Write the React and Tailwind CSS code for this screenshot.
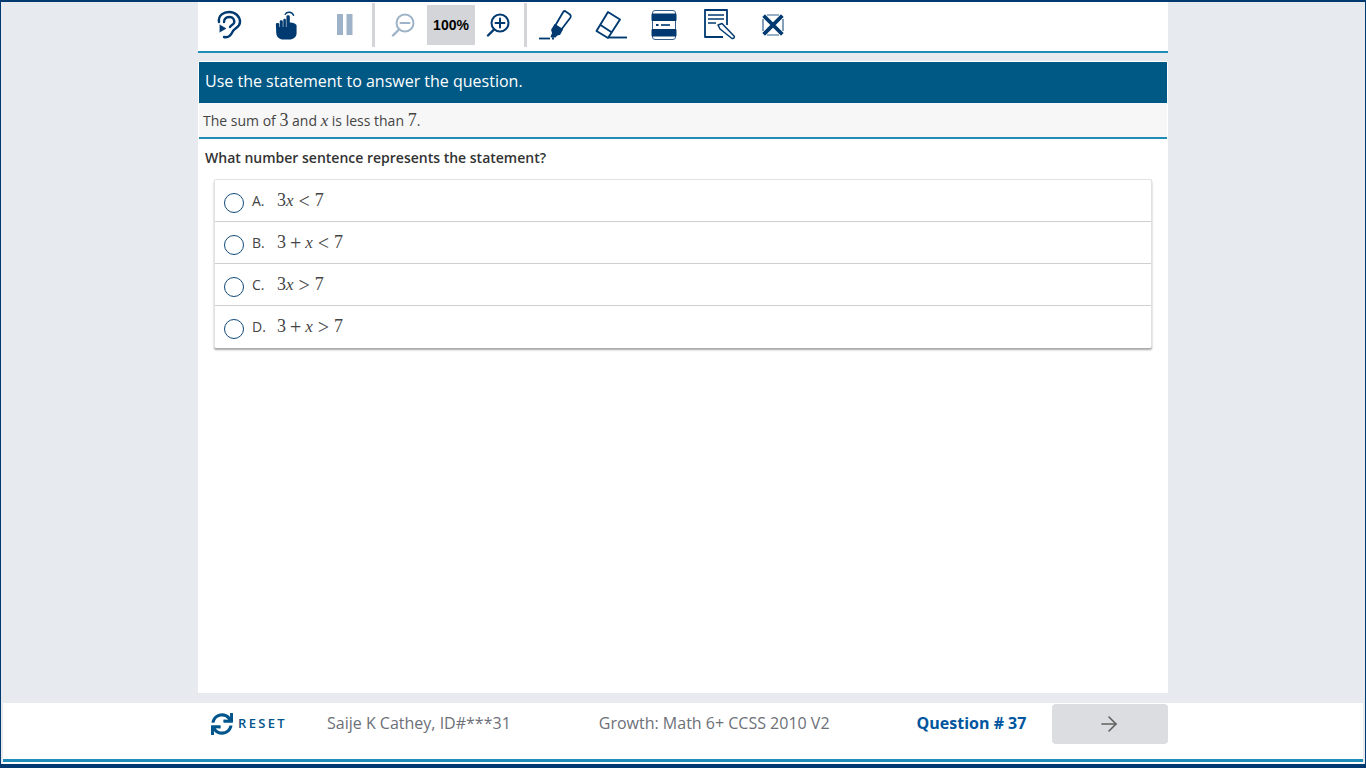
import { ArrowRight } from 'lucide-react';
import { FaSync } from 'react-icons/fa';

const EarIcon = () => (
  <svg width="26" height="30" viewBox="0 0 26 30" fill="none" stroke="#003a70" strokeWidth="2.4" strokeLinecap="round">
    <path d="M3 12 C2 5 8 2 13 2 C19 2 24 6 24 12 C24 17 19 18 17 21 C15 25 13 28 8 27" />
    <path d="M8 12 C8 8 11 7 13.5 7 C17 7 19 10 18 13 C17 15 15 15 14 17" />
    <path d="M4 15 L10 18.5 L4 22 Z" fill="#003a70" strokeWidth="0.5" strokeLinejoin="round" />
  </svg>
);

const HandIcon = () => (
  <svg width="22" height="29" viewBox="0 0 26 30" fill="none" preserveAspectRatio="none">
    <path d="M12 3.5 C14 0.5 20 0.5 22 4.5" stroke="#003a70" strokeWidth="1.5" strokeLinecap="round" />
    <path d="M13.5 6 C13.5 4 17.5 4 17.5 6 L17.5 12 C21 12 25 13 25.5 15 L25.5 23 C25.5 27 21.5 29.5 17 29.5 L10 29.5 C5 29.5 2 27 1.5 23 L1 14 C1 12 5 12 5 14 L5 16.5 L5.6 16.5 L5.6 11 C5.6 9 9.2 9 9.2 11 L9.2 16.5 L9.8 16.5 L9.8 9.5 C9.8 7.5 12.9 7.5 12.9 9.5 L12.9 16.5 L13.5 16.5 Z" fill="#003a70" />
  </svg>
);

const PauseIcon = () => (
  <svg width="16" height="22" viewBox="0 0 16 22" fill="#9fb3c8">
    <rect x="0" y="0" width="6" height="21" />
    <rect x="9.5" y="0" width="6" height="21" />
  </svg>
);

const ZoomIcon = ({ plus, color }) => (
  <svg width="24" height="24" viewBox="0 0 24 24" fill="none" stroke={color} strokeWidth="2" strokeLinecap="round">
    <circle cx="14" cy="10" r="8.5" />
    <path d="M8 16.5 L2 22.5" strokeWidth="2.4" />
    <path d="M9.5 10 H18.5" />
    {plus && <path d="M14 5.5 V14.5" />}
  </svg>
);

const HighlighterIcon = () => (
  <svg width="34" height="32" viewBox="0 0 34 32" fill="none" stroke="#003a70" strokeWidth="1.8" strokeLinejoin="round">
    <path d="M0 29.5 H11" />
    <path d="M13 29.5 H15" />
    <path d="M26 2 L31 5.5 C32 6.5 32 7.5 31.5 8.5 L22 21 L16 17 L24.5 2.5 C25 2 25.5 2 26 2 Z" />
    <path d="M16 16 L13 21 L14 24 L12.5 27.5 L16 27.5 L18 25.5 L20.5 25 L23 20.5 Z" fill="#003a70" />
  </svg>
);

const EraserIcon = () => (
  <svg width="34" height="30" viewBox="0 0 34 30" fill="none" stroke="#003a70" strokeWidth="1.9" strokeLinejoin="round">
    <path d="M13 2 L25 9.5 L13 28 L1.5 21 Z" />
    <path d="M5.5 15 L17 22.5" />
    <path d="M14 27.5 H32" />
  </svg>
);

const CalcIcon = () => (
  <svg width="26" height="30" viewBox="0 0 26 30" fill="none">
    <rect x="1.5" y="0.5" width="23" height="29" rx="2.5" stroke="#33618c" strokeWidth="1" />
    <rect x="0.5" y="3.5" width="25" height="7.5" rx="1" fill="#003a70" />
    <rect x="0.5" y="19" width="25" height="7.5" rx="1" fill="#003a70" />
    <rect x="5" y="14" width="2.5" height="2" fill="#003a70" />
    <rect x="10" y="14.2" width="9" height="1.6" fill="#003a70" />
  </svg>
);

const NotepadIcon = () => (
  <svg width="32" height="32" viewBox="0 0 32 32" fill="none" stroke="#003a70" strokeLinejoin="round">
    <path d="M19 28 H1 V1 H23 V16" strokeWidth="1.8" />
    <path d="M4 6 H20 M4 10 H20 M4 14 H12" strokeWidth="1.6" />
    <path d="M14 16 L18 14.5 L30 27 C31 28 30 30 28 29.5 L16 20 Z" strokeWidth="1.5" />
  </svg>
);

const CrossOutIcon = () => (
  <svg width="24" height="24" viewBox="0 0 24 24" fill="none" stroke="#003a70">
    <path d="M4 4 L20 20 M20 4 L4 20" strokeWidth="3.8" strokeLinecap="square" />
    <path d="M2 6 V18 M22 6 V18 M6 2 H18 M6 22 H18" strokeWidth="1.2" stroke="#33618c" />
  </svg>
);

const Num = ({ children }) => <span className="font-['Liberation_Serif',serif] text-[18px]">{children}</span>;
const Mi = ({ children }) => <i className="font-['Liberation_Serif',serif] text-[17px]">{children}</i>;
const Op = ({ children, tight }) => (
  <span className={`${tight ? 'mx-[4px]' : 'mx-[5px]'} font-['Liberation_Serif',serif] text-[20px] leading-none`}>{children}</span>
);

const choices = [
  { letter: 'A.', plus: false, op: '<' },
  { letter: 'B.', plus: true, op: '<' },
  { letter: 'C.', plus: false, op: '>' },
  { letter: 'D.', plus: true, op: '>' },
];

const Choice = ({ letter, plus, op, last }) => (
  <div className={`flex h-[42px] items-center pl-[9px] ${last ? 'pb-px' : 'border-b border-[#cfcfcf]'}`}>
    <span className="mt-[5px] h-5 w-5 rounded-full border-[1.5px] border-[#0f4a7a]" />
    <span className="ml-2 mt-px w-[25px] text-sm text-[#444]">{letter}</span>
    <span className="flex items-center text-[#444]">
      <Num>3</Num>
      {plus && <Op tight>+</Op>}
      <Mi>x</Mi>
      <Op>{op}</Op>
      <Num>7</Num>
    </span>
  </div>
);

export default function App() {
  return (
    <div className="flex h-screen w-full flex-col overflow-hidden border-x border-t-2 border-[#003a70] bg-white font-['Open_Sans','Noto_Sans',sans-serif]">
      <div className="flex min-h-0 flex-1 flex-col border-x-2 border-[#e7eaef]">
        <div className="flex min-h-0 flex-1 flex-col bg-[#e7eaef]">
          <div className="mx-auto flex min-h-0 w-[970px] flex-1 flex-col bg-white">
            <div className="flex h-[51px] shrink-0 items-center border-b-2 border-[#1f8db8] bg-white">
              <div className="flex items-center pb-[3px] pl-[18px]">
                <EarIcon />
                <span className="ml-[33px]"><HandIcon /></span>
                <span className="ml-[40px]"><PauseIcon /></span>
                <span className="ml-[19px] h-[44px] w-[3px] bg-[#d4d5d8]" />
                <span className="ml-[16px]"><ZoomIcon color="#9fb3c8" /></span>
                <span className="ml-[12px] flex h-10 w-12 items-center justify-center bg-[#d4d5d8] font-['Liberation_Sans',sans-serif] text-sm font-bold text-black">100%</span>
                <span className="ml-[11px]"><ZoomIcon plus color="#003a70" /></span>
                <span className="ml-[14px] h-[44px] w-[3px] bg-[#d4d5d8]" />
                <span className="ml-[12px]"><HighlighterIcon /></span>
                <span className="ml-[22px]"><EraserIcon /></span>
                <span className="ml-[22px]"><CalcIcon /></span>
                <span className="ml-[27px]"><NotepadIcon /></span>
                <span className="ml-[25px]"><CrossOutIcon /></span>
              </div>
            </div>
            <div className="h-2 shrink-0 bg-[#e7eaef]" />
            <div className="h-px shrink-0 bg-white" />
            <div className="mx-px flex h-[41px] shrink-0 items-center bg-[#005885] pb-1 pl-[6px] text-base text-white">
              Use the statement to answer the question.
            </div>
            <div className="mx-px flex h-9 shrink-0 items-center border-b-2 border-[#1f8db8] bg-[#f7f7f7] pl-1 pt-px text-sm text-[#444]">
              <span className="whitespace-pre">
                The sum of <Num>3</Num> and <Mi>x</Mi> is less than <Num>7</Num>.
              </span>
            </div>
            <p className="pl-[7px] pt-[9px] text-sm leading-5 font-semibold text-[#333]">What number sentence represents the statement?</p>
            <div className="mx-4 mt-[11px] rounded-[2px] border border-b-0 border-[#e2e2e2] bg-white shadow-[0_2px_2px_rgba(0,0,0,0.35)]">
              {choices.map((choice, index) => (
                <Choice key={choice.letter} {...choice} last={index === choices.length - 1} />
              ))}
            </div>
          </div>
          <div className="h-[10px] shrink-0" />
        </div>
        <div className="flex h-[56px] shrink-0 justify-center bg-white pt-px">
          <div className="flex h-10 w-[970px] items-center whitespace-nowrap pl-[13px]">
            <FaSync size={22} color="#00558c" className="shrink-0" />
            <span className="ml-[5px] shrink-0 text-[13px] font-semibold tracking-[0.18em] text-[#00558c]">RESET</span>
            <span className="ml-[40px] shrink-0 pb-[3px] text-base text-[#6d7078]">Saije K Cathey, ID#***31</span>
            <span className="ml-[88px] shrink-0 pb-[3px] text-base text-[#6d7078]">Growth: Math 6+ CCSS 2010 V2</span>
            <span className="ml-[87px] shrink-0 pb-[3px] text-base font-bold text-[#00569f]">Question # 37</span>
            <button type="button" className="ml-[26px] flex h-10 w-[116px] shrink-0 items-center justify-center rounded bg-[#dcdde0] pr-0.5">
              <ArrowRight size={24} strokeWidth={1.6} color="#606060" />
            </button>
          </div>
        </div>
        <div className="h-[3px] shrink-0 bg-[#1f8db8]" />
        <div className="h-[2px] shrink-0 bg-white" />
      </div>
      <div className="h-1 shrink-0 bg-[#003a70]" />
    </div>
  );
}
